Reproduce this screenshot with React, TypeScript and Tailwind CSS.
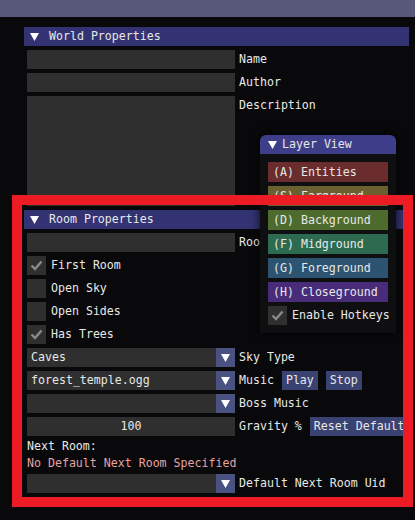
import { ReactNode } from 'react';

const font = "font-['DejaVu_Sans_Mono',monospace] text-[11.6px] leading-[13px] text-[#e8e8e8]";

function DownTriangle({ size = 9 }: { size?: number }) {
  return (
    <svg width={size} height={size - 1} viewBox="0 0 9 8">
      <polygon points="0,0 9,0 4.5,8" fill="#ffffff" />
    </svg>
  );
}

function CheckMark() {
  return (
    <svg width="13" height="11" viewBox="0 0 13 11">
      <polyline points="1.5,5.5 5,9 11.5,1.5" fill="none" stroke="#8a8a8a" strokeWidth="2.4" />
    </svg>
  );
}

function Header({ title }: { title: string }) {
  return (
    <div className="h-[19px] bg-[#333373] flex items-center pl-[6px] gap-[10px]">
      <DownTriangle />
      <span>{title}</span>
    </div>
  );
}

function Field({ label, height = 19, children }: { label?: string; height?: number; children?: ReactNode }) {
  return (
    <div className="flex items-start gap-[4px] ml-[3px]">
      <div className="w-[208px] bg-[#2f2f2f] flex items-center justify-center" style={{ height }}>
        {children}
      </div>
      {label && <span className="h-[19px] flex items-center whitespace-nowrap">{label}</span>}
    </div>
  );
}

function Checkbox({ label, checked }: { label: string; checked?: boolean }) {
  return (
    <div className="flex items-center gap-[5px] ml-[3px] h-[19px]">
      <div className="w-[19px] h-[19px] bg-[#2f2f2f] flex items-center justify-center">
        {checked && <CheckMark />}
      </div>
      <span className="whitespace-nowrap">{label}</span>
    </div>
  );
}

function Combo({ value, label, children }: { value?: string; label: string; children?: ReactNode }) {
  return (
    <div className="flex items-center ml-[3px] h-[19px]">
      <div className="w-[208px] h-[19px] bg-[#2f2f2f] flex">
        <span className="flex-1 pl-[4px] flex items-center">{value}</span>
        <div className="w-[19px] h-[19px] bg-[#4a5282] flex items-center justify-center">
          <DownTriangle />
        </div>
      </div>
      <span className="ml-[4px] whitespace-nowrap">{label}</span>
      {children}
    </div>
  );
}

function Btn({ text }: { text: string }) {
  return <div className="ml-[8px] h-[19px] px-[4px] bg-[#3a4272] flex items-center whitespace-nowrap">{text}</div>;
}

const layers = [
  { name: '(A) Entities', color: 'bg-[#6a2c2c]' },
  { name: '(S) Farground', color: 'bg-[#6b6030]' },
  { name: '(D) Background', color: 'bg-[#4c6b2c]' },
  { name: '(F) Midground', color: 'bg-[#2c6b50]' },
  { name: '(G) Foreground', color: 'bg-[#2c5470]' },
  { name: '(H) Closeground', color: 'bg-[#482c7a]' },
];

export default function App() {
  return (
    <div className={`relative w-[415px] h-[520px] overflow-hidden bg-[#09090b] ${font}`}>
      <div className="h-[17px] bg-[#585879]" />

      <div className="pl-[24px] pt-[10px] w-[409px] flex flex-col gap-[4px]">
        <Header title="World Properties" />
        <Field label="Name" />
        <Field label="Author" />
        <Field label="Description" height={110} />

        <Header title="Room Properties" />
        <Field label="Room Name" />
        <Checkbox label="First Room" checked />
        <Checkbox label="Open Sky" />
        <Checkbox label="Open Sides" />
        <Checkbox label="Has Trees" checked />
        <Combo value="Caves" label="Sky Type" />
        <Combo value="forest_temple.ogg" label="Music">
          <Btn text="Play" />
          <Btn text="Stop" />
        </Combo>
        <Combo label="Boss Music" />
        <div className="flex items-center ml-[3px] h-[19px]">
          <div className="w-[208px] h-[19px] bg-[#2f2f2f] flex items-center justify-center">100</div>
          <span className="ml-[4px] whitespace-nowrap">Gravity %</span>
          <Btn text="Reset Default" />
        </div>
        <div className="ml-[3px] h-[13px] whitespace-nowrap">Next Room:</div>
        <div className="ml-[3px] h-[13px] whitespace-nowrap text-[#e8a2a2]">No Default Next Room Specified</div>
        <Combo label="Default Next Room Uid" />
      </div>

      {/* floating Layer View window */}
      <div className="absolute left-[260px] top-[135px] w-[136px] bg-[#0f0f11] rounded-t-[6px] shadow-[0_0_10px_rgba(0,0,0,0.8)]">
        <div className="h-[19px] bg-[#3d3d8a] rounded-t-[6px] flex items-center pl-[8px] gap-[5px]">
          <DownTriangle />
          <span>Layer View</span>
        </div>
        <div className="p-[8px] flex flex-col gap-[4px]">
          {layers.map((l) => (
            <div key={l.name} className={`h-[20px] ${l.color} flex items-center pl-[5px] whitespace-nowrap`}>
              {l.name}
            </div>
          ))}
          <div className="flex items-center gap-[5px] h-[19px]">
            <div className="w-[19px] h-[19px] shrink-0 bg-[#2f2f2f] flex items-center justify-center">
              <CheckMark />
            </div>
            <span className="whitespace-nowrap">Enable Hotkeys</span>
          </div>
        </div>
      </div>

      {/* red annotation frame */}
      <div className="absolute left-[12px] top-[195px] w-[401px] h-[312px] border-[10px] border-[#ed1c24] pointer-events-none" />
    </div>
  );
}
